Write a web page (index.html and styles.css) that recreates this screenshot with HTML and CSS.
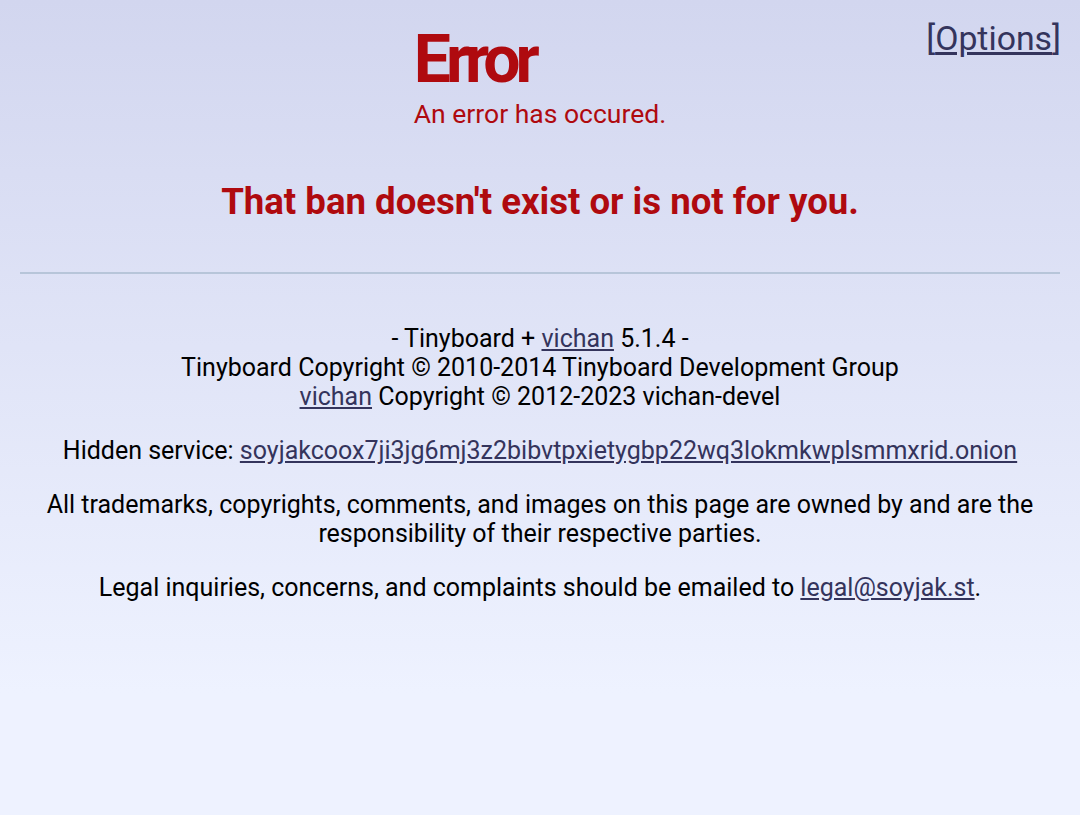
FILE: index.html
```html
<!DOCTYPE html>
<html>
<head>
<meta charset="utf-8">
<title>Error</title>
<link rel="stylesheet" href="styles.css">
</head>
<body>
<div class="options"><a class="opt-link" href="#">Options</a></div>
<header class="header">
  <div class="header-inner">
    <h1 class="title">Error</h1>
    <div class="subtitle">An error has occured.</div>
  </div>
</header>
<h2 class="message">That ban doesn't exist or is not for you.</h2>
<hr class="rule">
<footer class="footer">
  <p class="unimportant">- Tinyboard + <a href="#">vichan</a> 5.1.4 -<br>Tinyboard Copyright © 2010-2014 Tinyboard Development Group<br><a href="#">vichan</a> Copyright © 2012-2023 vichan-devel</p>
  <p class="unimportant">Hidden service: <a href="#">soyjakcoox7ji3jg6mj3z2bibvtpxietygbp22wq3lokmkwplsmmxrid.onion</a></p>
  <p class="unimportant">All trademarks, copyrights, comments, and images on this page are owned by and are the responsibility of their respective parties.</p>
  <p class="unimportant">Legal inquiries, concerns, and complaints should be emailed to <a href="#">legal@soyjak.st</a>.</p>
</footer>
</body>
</html>
```

FILE: styles.css
```css
html {
  min-height: 100%;
  background: linear-gradient(to bottom, #d2d6ef 0%, #eef2ff 85%, #eef2ff 100%);
}
body {
  margin: 0;
  padding: 0 20px;
  min-height: 815px;
  font-family: Roboto, "Liberation Sans", sans-serif;
  font-size: 25px;
  color: #000;
  position: relative;
}
a {
  color: #34345c;
}
.options {
  position: absolute;
  top: 19px;
  right: 19px;
  font-size: 33.8px;
  color: #34345c;
}
.options::before { content: "["; }
.options::after { content: "]"; }
.header {
  display: flex;
  justify-content: center;
  padding-top: 27px;
}
.header-inner {
  text-align: left;
}
.title {
  margin: 0;
  font-size: 66px;
  line-height: 66px;
  font-weight: 700;
  letter-spacing: -5px;
  color: #af0a0f;
}
.subtitle {
  margin-top: 6px;
  font-size: 26.5px;
  line-height: 30px;
  color: #af0a0f;
}
.message {
  margin: 53px 0 0;
  text-align: center;
  font-size: 36.6px;
  line-height: 40px;
  font-weight: 700;
  color: #af0a0f;
}
.rule {
  margin: 50px 0 0;
  border: 0;
  border-top: 2px solid #b7c5d9;
}
.footer {
  padding-top: 50px;
  text-align: center;
}
.unimportant {
  margin: 0 0 25px;
  line-height: 29px;
}
```
